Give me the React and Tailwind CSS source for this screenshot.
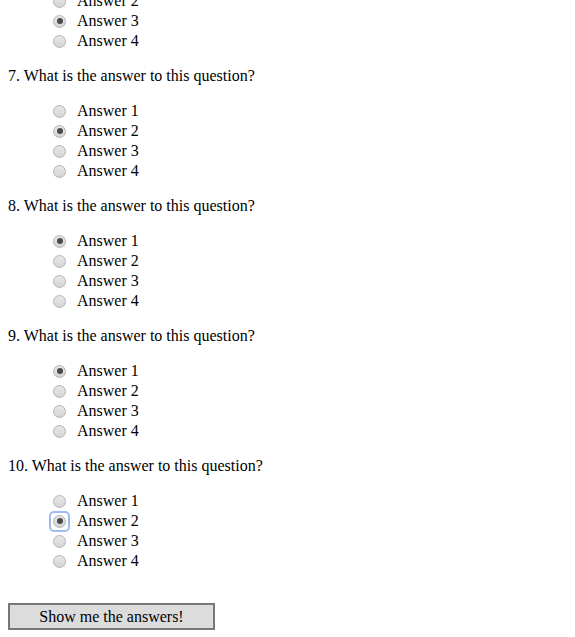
import React from "react";

const questions = [
  { n: 7, checked: 2 },
  { n: 8, checked: 1 },
  { n: 9, checked: 1 },
  { n: 10, checked: 2, focused: true },
];

function Radio({ checked, focused }) {
  return (
    <span className={"flex h-[17px] w-[17px] items-center justify-center rounded-[3px] " + (focused ? "ring-2 ring-[#9cbcf2]" : "")}>
      <span className="flex h-[13px] w-[13px] items-center justify-center rounded-full border border-[#b4b4b4] bg-gradient-to-b from-[#e8e8e8] to-[#d4d4d4]">
        {checked && <span className="h-[6px] w-[6px] rounded-full bg-[#4a4a4a]" />}
      </span>
    </span>
  );
}

function Answer({ label, checked, focused }) {
  return (
    <div className="flex h-5 items-center">
      <span className="ml-[43px] mr-[9px] flex items-center">
        <Radio checked={checked} focused={focused} />
      </span>
      <span>{label}</span>
    </div>
  );
}

export default function App() {
  return (
    <div className="min-h-[637px] bg-white px-2 text-base leading-5 text-black" style={{ fontFamily: '"Liberation Serif", "Times New Roman", serif' }}>
      <div className="mt-[-9px]">
        <Answer label="Answer 2" />
        <Answer label="Answer 3" checked />
        <Answer label="Answer 4" />
      </div>
      {questions.map((q) => (
        <div key={q.n} className="mt-[15px]">
          <div className="h-5">{q.n}. What is the answer to this question?</div>
          <div className="mt-[15px]">
            {[1, 2, 3, 4].map((a) => (
              <Answer key={a} label={"Answer " + a} checked={q.checked === a} focused={q.focused && q.checked === a} />
            ))}
          </div>
        </div>
      ))}
      <button className="mt-[32px] h-[27px] w-[207px] border-2 border-[#777] bg-[#dcdcdc] text-center">
        Show me the answers!
      </button>
    </div>
  );
}
